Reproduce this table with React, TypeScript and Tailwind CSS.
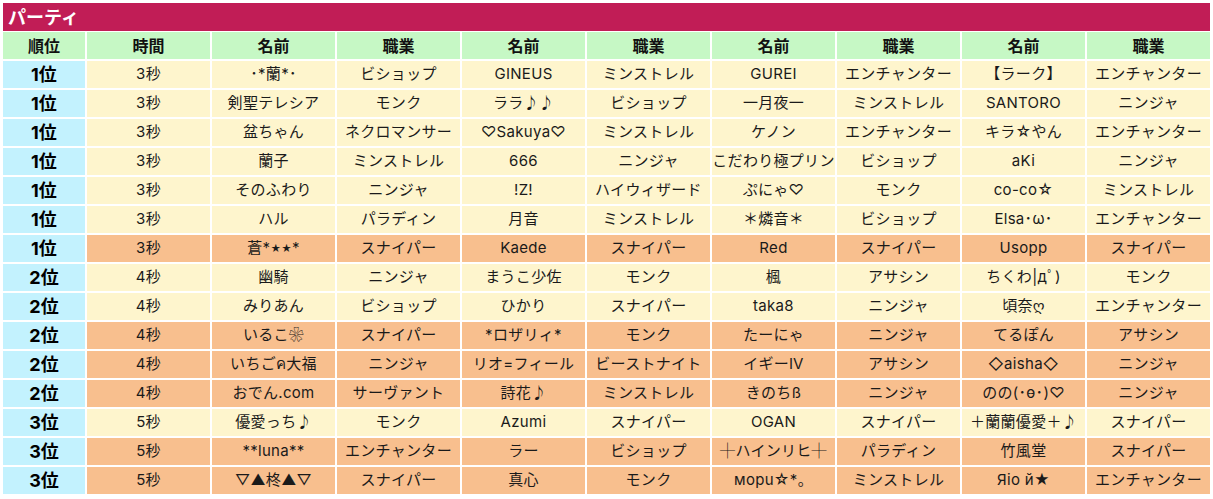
import React from 'react';

// One ranking row: rank, time, then four (name, job) pairs
interface PartyRow {
  rank: string;
  time: string;
  members: [React.ReactNode, string][];
  hot?: boolean; // peach highlighted row
}

const headers = ['順位', '時間', '名前', '職業', '名前', '職業', '名前', '職業', '名前', '職業'];

const rows: PartyRow[] = [
  { rank: '1位', time: '3秒', members: [['･*蘭*･', 'ビショップ'], ['GINEUS', 'ミンストレル'], ['GUREI', 'エンチャンター'], ['【ラーク】', 'エンチャンター']] },
  { rank: '1位', time: '3秒', members: [['剣聖テレシア', 'モンク'], ['ララ♪♪', 'ビショップ'], ['一月夜一', 'ミンストレル'], ['SANTORO', 'ニンジャ']] },
  { rank: '1位', time: '3秒', members: [['盆ちゃん', 'ネクロマンサー'], ['♡Sakuya♡', 'ミンストレル'], ['ケノン', 'エンチャンター'], ['キラ☆やん', 'エンチャンター']] },
  { rank: '1位', time: '3秒', members: [['蘭子', 'ミンストレル'], ['666', 'ニンジャ'], ['こだわり極プリン', 'ビショップ'], ['aKi', 'ニンジャ']] },
  { rank: '1位', time: '3秒', members: [['そのふわり', 'ニンジャ'], ['!Z!', 'ハイウィザード'], ['ぷにゃ♡', 'モンク'], ['co-co☆', 'ミンストレル']] },
  { rank: '1位', time: '3秒', members: [['ハル', 'パラディン'], ['月音', 'ミンストレル'], ['＊燐音＊', 'ビショップ'], ['Elsa･ω･', 'エンチャンター']] },
  {
    rank: '1位',
    time: '3秒',
    hot: true,
    members: [
      [<>蒼*<span className="text-[10px]">★★</span>*</>, 'スナイパー'],
      ['Kaede', 'スナイパー'],
      ['Red', 'スナイパー'],
      ['Usopp', 'スナイパー'],
    ],
  },
  { rank: '2位', time: '4秒', members: [['幽騎', 'ニンジャ'], ['まうこ少佐', 'モンク'], ['楓', 'アサシン'], ['ちくわ|дﾟ)', 'モンク']] },
  { rank: '2位', time: '4秒', members: [['みりあん', 'ビショップ'], ['ひかり', 'スナイパー'], ['taka8', 'ニンジャ'], ['頃奈ღ', 'エンチャンター']] },
  { rank: '2位', time: '4秒', hot: true, members: [['いるこ❀', 'スナイパー'], ['*ロザリィ*', 'モンク'], ['たーにゃ', 'ニンジャ'], ['てるぽん', 'アサシン']] },
  { rank: '2位', time: '4秒', hot: true, members: [['いちごค大福', 'ニンジャ'], ['リオ=フィール', 'ビーストナイト'], ['イギーⅣ', 'アサシン'], ['◇aisha◇', 'ニンジャ']] },
  { rank: '2位', time: '4秒', hot: true, members: [['おでん.com', 'サーヴァント'], ['詩花♪', 'ミンストレル'], ['きのちß', 'ニンジャ'], ['のの(･ө･)♡', 'ニンジャ']] },
  { rank: '3位', time: '5秒', members: [['優愛っち♪', 'モンク'], ['Azumi', 'スナイパー'], ['OGAN', 'スナイパー'], ['＋蘭蘭優愛＋♪', 'スナイパー']] },
  { rank: '3位', time: '5秒', hot: true, members: [['**luna**', 'エンチャンター'], ['ラー', 'ビショップ'], ['┼ハインリヒ┼', 'パラディン'], ['竹風堂', 'スナイパー']] },
  { rank: '3位', time: '5秒', hot: true, members: [['▽▲柊▲▽', 'スナイパー'], ['真心', 'モンク'], ['мopu☆*。', 'ミンストレル'], ['Яіо й★', 'エンチャンター']] },
];

const Cell: React.FC<{ hot?: boolean; children: React.ReactNode }> = ({ hot, children }) => (
  <div
    className={
      'flex h-[27px] items-center justify-center whitespace-nowrap text-[15px] tracking-[0.02em] text-[#1a1a1a] ' +
      (hot ? 'bg-[#f8bf8e]' : 'bg-[#fef5cd]')
    }
  >
    {children}
  </div>
);

export default function App() {
  return (
    <div
      className="w-[1213px] bg-white p-[3px]"
      style={{ fontFamily: 'Inter, "Noto Sans CJK JP", "DejaVu Sans", sans-serif' }}
    >
      <div className="mb-[1px] flex h-[28px] items-center bg-[#c11d56] px-[5px] text-[18px] font-bold text-white">
        パーティ
      </div>
      <div className="grid grid-cols-[82px_repeat(9,123px)] gap-[2px]">
        {headers.map((h, i) => (
          <div
            key={i}
            className="flex h-[27px] items-center justify-center bg-[#c6f8c5] text-[16px] font-bold text-[#111111]"
          >
            {h}
          </div>
        ))}
        {rows.map((row, ri) => (
          <React.Fragment key={ri}>
            <div className="flex h-[27px] items-center justify-center bg-[#c3f2fe] text-[18px] font-bold text-black">
              {row.rank}
            </div>
            <Cell hot={row.hot}>{row.time}</Cell>
            {row.members.map(([name, job], mi) => (
              <React.Fragment key={mi}>
                <Cell hot={row.hot}>{name}</Cell>
                <Cell hot={row.hot}>{job}</Cell>
              </React.Fragment>
            ))}
          </React.Fragment>
        ))}
      </div>
    </div>
  );
}
